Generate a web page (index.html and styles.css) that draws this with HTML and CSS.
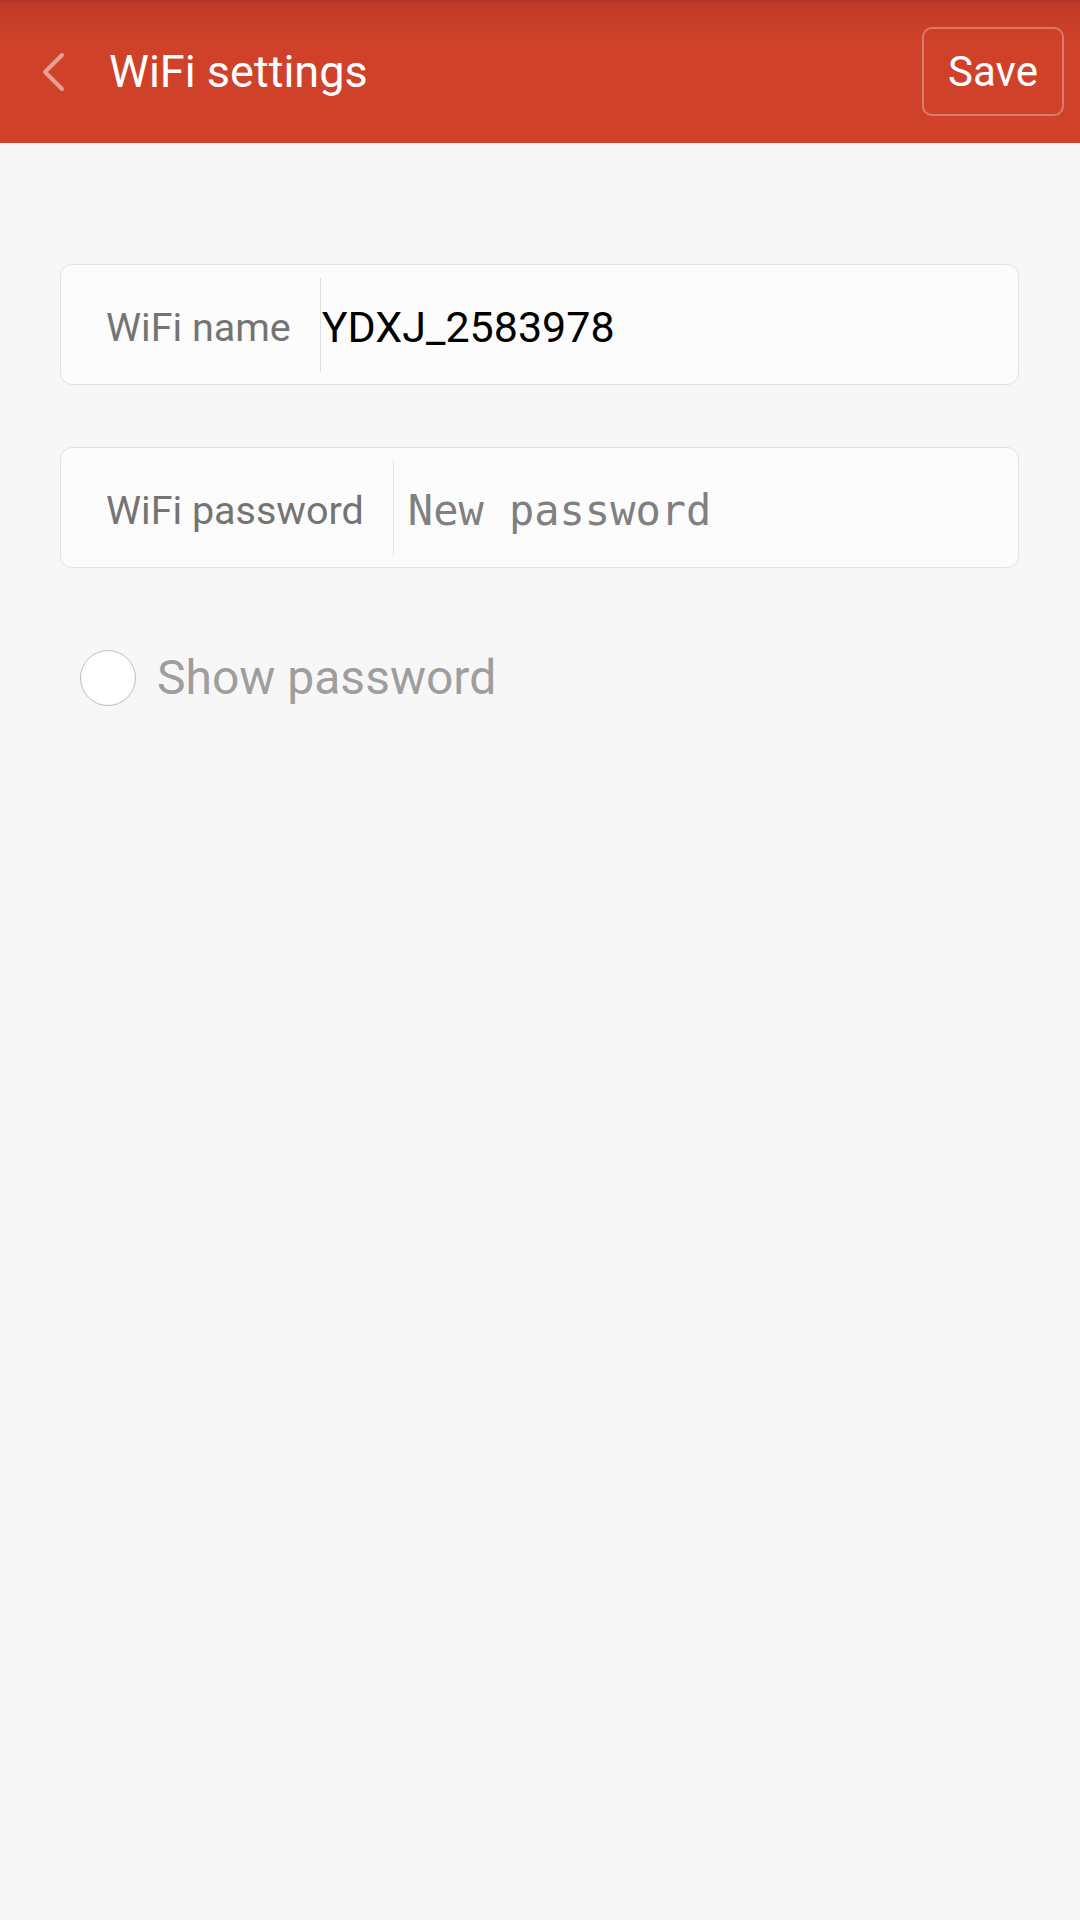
FILE: index.html
```html
<!DOCTYPE html>
<html lang="en">
<head>
  <meta charset="UTF-8" />
  <title>WiFi settings</title>
  <link rel="stylesheet" href="styles.css">
</head>
<body>

  <header class="topbar">
    <button class="back" aria-label="Back">
      <svg width="40" height="50" viewBox="0 0 40 50">
        <polyline points="32,8 15,25 32,42" fill="none" stroke="#fff" stroke-opacity="0.5" stroke-width="4" stroke-linecap="round" stroke-linejoin="round" />
      </svg>
    </button>
    <h1 class="title">WiFi settings</h1>
    <button class="save">Save</button>
  </header>

  <main class="form">
    <div class="field">
      <span class="field-label">WiFi name</span>
      <span class="field-divider"></span>
      <input class="field-value" type="text" value="YDXJ_2583978">
    </div>

    <div class="field field-gap">
      <span class="field-label">WiFi password</span>
      <span class="field-divider"></span>
      <input class="field-value field-pass" type="password" placeholder="New password">
    </div>

    <label class="show-pass">
      <span class="check"></span>
      <span>Show password</span>
    </label>
  </main>

</body>
</html>
```

FILE: styles.css
```css
body {
  margin: 0;
  padding: 0;
  background: #f7f7f7;
  font-family: Roboto, "Noto Sans", sans-serif;
  min-height: 1920px;
}

.topbar {
  height: 143px;
  display: flex;
  align-items: center;
  background: linear-gradient(#b23727 0, #c03b28 4px, #cf4229 40px, #cf4229 100%);
  color: #fff;
}
.back {
  margin-left: 30px;
  width: 40px;
  height: 50px;
  padding: 0;
  border: none;
  background: none;
  display: block;
}
.back svg {
  display: block;
}
.title {
  flex: 1;
  margin: 0 0 0 39px;
  font-size: 45px;
  font-weight: normal;
}
.save {
  margin-right: 16px;
  width: 142px;
  height: 89px;
  border: 2px solid rgba(255,255,255,0.3);
  border-radius: 10px;
  background: none;
  color: #fff;
  font-family: Roboto, sans-serif;
  font-size: 42px;
  padding: 0;
}

.form {
  padding: 121px 61px 0 60px;
}
.field {
  height: 121px;
  box-sizing: border-box;
  display: flex;
  align-items: center;
  padding: 5px 0 0 45px;
  background: #fcfcfc;
  border: 1px solid #e2e2e2;
  border-radius: 12px;
}
.field-gap {
  margin-top: 62px;
}
.field-label {
  font-size: 39.5px;
  color: #747474;
  padding-right: 29px;
  white-space: nowrap;
}
.field-divider {
  width: 1px;
  height: 94px;
  margin-top: -5px;
  background: #e0e0e0;
  flex-shrink: 0;
}
.field-value {
  flex: 1;
  min-width: 0;
  border: none;
  outline: none;
  background: none;
  padding: 0 0 0 1px;
  font-family: Roboto, sans-serif;
  font-size: 43px;
  color: #000;
}
.field-pass {
  padding-left: 14px;
  font-size: 42px;
  font-family: "DejaVu Sans Mono", monospace;
}
.field-pass::placeholder {
  color: #808080;
}

.show-pass {
  margin-top: 81px;
  padding-left: 20px;
  display: flex;
  align-items: center;
  gap: 21px;
  font-size: 48px;
  color: #9e9e9e;
}
.check {
  width: 56px;
  height: 56px;
  box-sizing: border-box;
  border: 1px solid #bdbdbd;
  border-radius: 50%;
  background: #fff;
}
```
